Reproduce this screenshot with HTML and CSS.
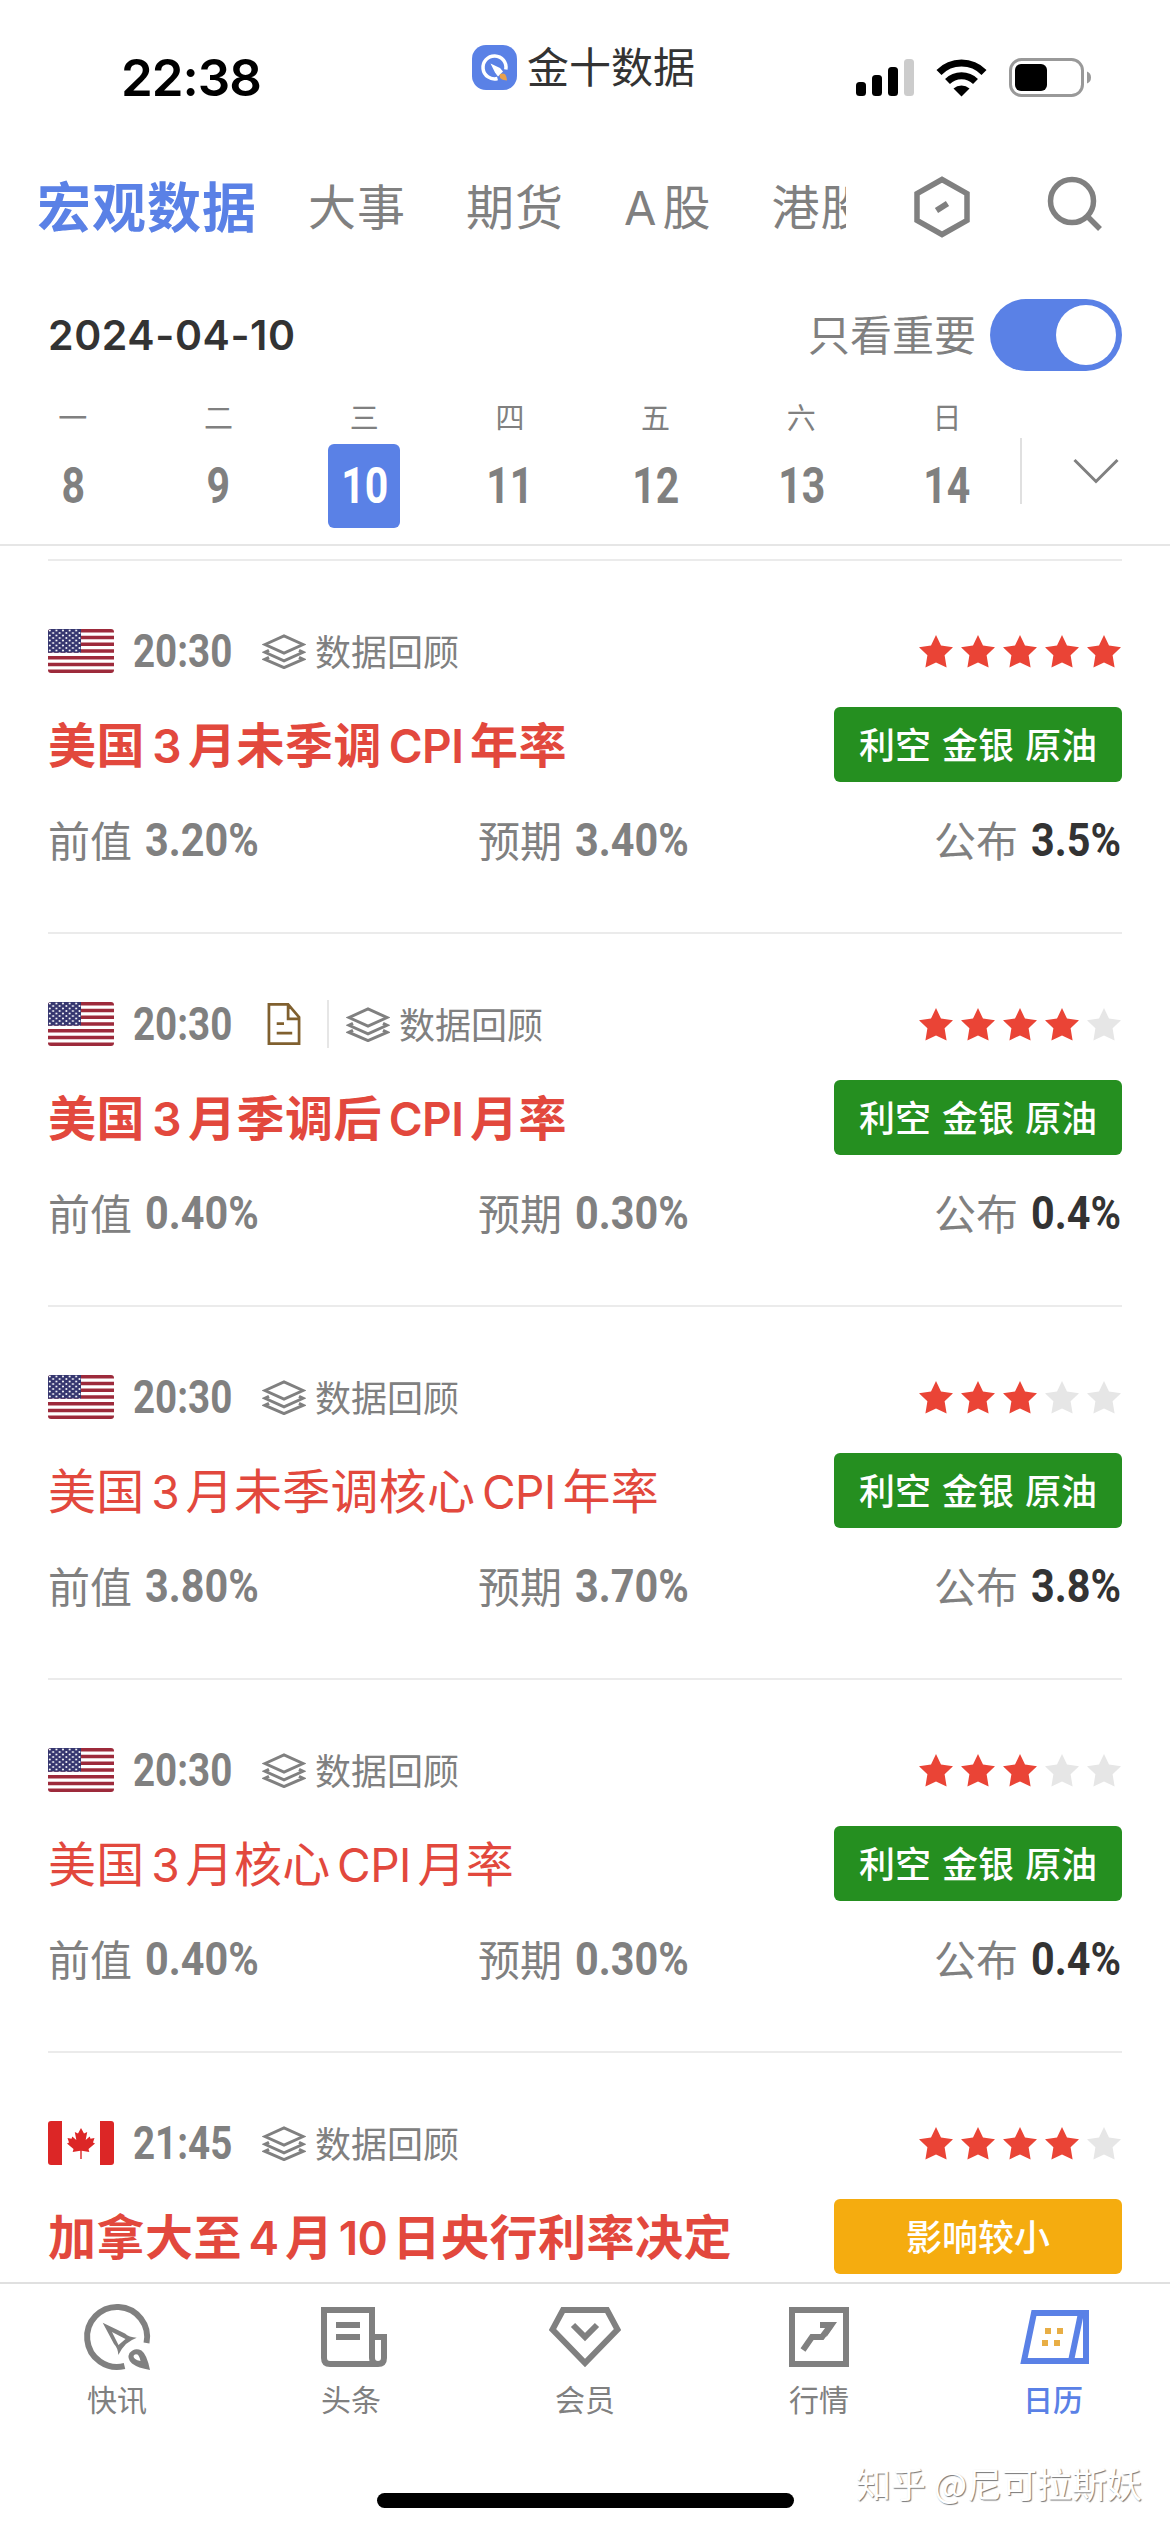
FILE: index.html
```html
<!DOCTYPE html>
<html lang="zh-CN">

<head>
  <meta charset="UTF-8">
  <meta name="viewport" content="width=device-width, initial-scale=1.0">
  <title>金十数据</title>
  <link rel="stylesheet" href="styles.css">
</head>

<body>
  <!-- 公用图标 -->
  <svg class="defs" width="0" height="0">
    <symbol id="star" viewBox="0 0 34 33">
      <path d="M17 0l5 10.600 12 1.600-8.400 8 2 12.300L17 27.400 6.400 32.500l2-12.300L0 12.200l12-1.600z" />
    </symbol>
    <symbol id="layers" viewBox="0 0 44 35">
      <g fill="none" stroke="#808080" stroke-width="3">
        <path d="M3 10.500L22 2l19 8.500L22 19z" />
        <path d="M7 16.300l-4 2 19 8.500 19-8.500-4-2" />
        <path d="M7 23.300l-4 2 19 8.300 19-8.300-4-2" />
      </g>
    </symbol>
    <pattern id="dots" width="6.600" height="5" patternUnits="userSpaceOnUse">
      <circle cx="1.800" cy="1.500" r="1" fill="#fff" />
      <circle cx="5.100" cy="4" r="1" fill="#fff" />
    </pattern>
    <symbol id="us" viewBox="0 0 66 44">
      <rect width="66" height="44" fill="#fff" />
      <path d="M0 1.700h66M0 8.500h66M0 15.200h66M0 22h66M0 28.800h66M0 35.500h66M0 42.300h66" stroke="#9d2a3b" stroke-width="3.400" />
      <rect width="33" height="23.700" fill="#35366f" />
      <rect width="33" height="23.700" fill="url(#dots)" />
    </symbol>
    <symbol id="ca" viewBox="0 0 66 44">
      <rect width="66" height="44" fill="#fff" />
      <path d="M0 0h14v44H0zM52 0h14v44H52z" fill="#dc2626" />
      <path d="M33 7l-3 5.500-3.200-1.500 1.500 8-4-3.500-.8 2.300-4-.8 1.500 4.500-2 1 6.500 5.500-.8 3 7.600-1.200V38h1.400v-8.200l7.600 1.200-.8-3 6.500-5.500-2-1 1.500-4.500-4 .8-.8-2.300-4 3.500 1.500-8-3.200 1.500z" fill="#dc2626" />
    </symbol>
  </svg>

  <div class="status">
    <span class="clock">22:38</span>
    <div class="app">
      <svg class="logo" viewBox="0 0 45 45">
        <rect width="45" height="45" rx="14" fill="#5a81e6" />
        <path d="M25.500 33.500a11.500 11.500 0 1 1 8.300-9" fill="none" stroke="#fff" stroke-width="3.500" />
        <path d="M18.500 18.500l9.500 4.500 3 3.500-5 5-3-4z" fill="#fff" />
        <path d="M28 29c5-2 6.500 1 7 6.500-5-.5-8.500-2-7-6.500z" fill="#e8a04c" />
      </svg>
      <span>金十数据</span>
    </div>
    <svg class="signal" viewBox="0 0 236 40">
      <rect x="0" y="24" width="10" height="14" rx="3.500" />
      <rect x="16" y="17" width="10" height="21" rx="3.500" />
      <rect x="32" y="9" width="10" height="29" rx="3.500" />
      <rect x="48" y="1" width="10" height="37" rx="3.500" fill="#ccc" />
      <g fill="none" stroke="#000" stroke-width="7">
        <path d="M83 14.500a31.500 31.500 0 0 1 45 0" />
        <path d="M91.500 23.500a20 20 0 0 1 28 0" />
      </g>
      <path d="M97.500 30.500a12 12 0 0 1 16 0l-8 8z" />
      <rect x="154.500" y="1.500" width="72" height="36" rx="11" fill="none" stroke="#999" stroke-width="3" />
      <rect x="159" y="6" width="32" height="27" rx="6" />
      <path d="M231 13.500q4 1.500 4 6t-4 6z" fill="#999" />
    </svg>
  </div>

  <div class="tabs">
    <div class="tab-list">
      <span class="active">宏观数据</span>
      <span>大事</span>
      <span>期货</span>
      <span><b class="en">A</b>股</span>
      <span>港股</span>
    </div>
    <svg class="hex" viewBox="0 0 56 62" fill="none" stroke="#808080">
      <path d="M28 3.500L53 17.500v27L28 58.500 3 44.500v-27z" stroke-width="5.500" />
      <path d="M22.500 34.500l11-7" stroke-width="6" />
    </svg>
    <svg class="search" viewBox="0 0 56 56" fill="none" stroke="#808080" stroke-width="5.500">
      <circle cx="25" cy="25" r="21.500" />
      <path d="M40 40l13 13" />
    </svg>
  </div>

  <div class="date-bar">
    <span class="date">2024-04-10</span>
    <span class="only">只看重要</span>
    <i class="switch"></i>
  </div>

  <div class="week">
    <div class="day"><span>一</span><b><i>8</i></b></div>
    <div class="day"><span>二</span><b><i>9</i></b></div>
    <div class="day on"><span>三</span><b><i>10</i></b></div>
    <div class="day"><span>四</span><b><i>11</i></b></div>
    <div class="day"><span>五</span><b><i>12</i></b></div>
    <div class="day"><span>六</span><b><i>13</i></b></div>
    <div class="day"><span>日</span><b><i>14</i></b></div>
    <div class="more">
      <svg viewBox="0 0 46 26" fill="none" stroke="#808080" stroke-width="3">
        <path d="M1.500 2L23 23.500 44.500 2" />
      </svg>
    </div>
  </div>

  <div class="list">
    <div class="item">
      <div class="top">
        <svg class="flag"><use href="#us" /></svg>
        <span class="time"><i>20:30</i></span>
        <svg class="layers"><use href="#layers" /></svg>
        <span class="review">数据回顾</span>
        <div class="stars" data-n="5"></div>
      </div>
      <div class="mid">
        <p class="title bold">美国<b class="num">3</b>月未季调<b class="cpi">CPI</b>年率</p>
        <span class="tag">利空 金银 原油</span>
      </div>
      <div class="values">
        <p>前值<span class="val"><i>3.20%</i></span></p>
        <p>预期<span class="val"><i>3.40%</i></span></p>
        <p>公布<span class="val now"><i>3.5%</i></span></p>
      </div>
    </div>

    <div class="item">
      <div class="top">
        <svg class="flag"><use href="#us" /></svg>
        <span class="time"><i>20:30</i></span>
        <span class="note">
          <svg class="doc" viewBox="0 0 36 46" fill="none" stroke="#80602f" stroke-width="3">
            <path d="M1.500 1.500h21l12 14v29h-33zM22.500 1.500v16h12M10 22.500h8M10 33h17" />
          </svg>
        </span>
        <svg class="layers"><use href="#layers" /></svg>
        <span class="review">数据回顾</span>
        <div class="stars" data-n="4"></div>
      </div>
      <div class="mid">
        <p class="title bold">美国<b class="num">3</b>月季调后<b class="cpi">CPI</b>月率</p>
        <span class="tag">利空 金银 原油</span>
      </div>
      <div class="values">
        <p>前值<span class="val"><i>0.40%</i></span></p>
        <p>预期<span class="val"><i>0.30%</i></span></p>
        <p>公布<span class="val now"><i>0.4%</i></span></p>
      </div>
    </div>

    <div class="item">
      <div class="top">
        <svg class="flag"><use href="#us" /></svg>
        <span class="time"><i>20:30</i></span>
        <svg class="layers"><use href="#layers" /></svg>
        <span class="review">数据回顾</span>
        <div class="stars" data-n="3"></div>
      </div>
      <div class="mid">
        <p class="title">美国<b class="num">3</b>月未季调核心<b class="cpi">CPI</b>年率</p>
        <span class="tag">利空 金银 原油</span>
      </div>
      <div class="values">
        <p>前值<span class="val"><i>3.80%</i></span></p>
        <p>预期<span class="val"><i>3.70%</i></span></p>
        <p>公布<span class="val now"><i>3.8%</i></span></p>
      </div>
    </div>

    <div class="item">
      <div class="top">
        <svg class="flag"><use href="#us" /></svg>
        <span class="time"><i>20:30</i></span>
        <svg class="layers"><use href="#layers" /></svg>
        <span class="review">数据回顾</span>
        <div class="stars" data-n="3"></div>
      </div>
      <div class="mid">
        <p class="title">美国<b class="num">3</b>月核心<b class="cpi">CPI</b>月率</p>
        <span class="tag">利空 金银 原油</span>
      </div>
      <div class="values">
        <p>前值<span class="val"><i>0.40%</i></span></p>
        <p>预期<span class="val"><i>0.30%</i></span></p>
        <p>公布<span class="val now"><i>0.4%</i></span></p>
      </div>
    </div>

    <div class="item">
      <div class="top">
        <svg class="flag"><use href="#ca" /></svg>
        <span class="time"><i>21:45</i></span>
        <svg class="layers"><use href="#layers" /></svg>
        <span class="review">数据回顾</span>
        <div class="stars" data-n="4"></div>
      </div>
      <div class="mid">
        <p class="title bold">加拿大至<b class="num">4</b>月<b class="ten">10</b>日央行利率决定</p>
        <span class="tag small">影响较小</span>
      </div>
    </div>
  </div>

  <div class="nav">
    <a>
      <svg viewBox="0 0 72 72">
        <path d="M43.500 65A30 30 0 1 1 65.500 42" fill="none" stroke="#808080" stroke-width="6" />
        <path d="M21.700 21.700L44 32.500q4 4 11.700 4.200-6 2.300-10.700 6.300-4.500 4.500-7.700 11Q37 47 33 43zM31 31l6.500 13 7-6z" fill="#808080" fill-rule="evenodd" />
        <path d="M69 69q-12-2-18-6.500-5.500-5-2.500-10.500 5-6 12-2.500 5.500 4 8.500 19.500zM59.500 60q-1-5-3-6.500-3-1-4 1.500 0 3.500 7 5z" fill="#808080" fill-rule="evenodd" />
      </svg>
      <span>快讯</span>
    </a>
    <a>
      <svg viewBox="0 0 72 72" fill="none" stroke="#808080" stroke-width="6">
        <path d="M54 63H15q-6 0-6-6V9h48v48q0 6 6 6t6-6V36H57" />
        <path d="M21 24h24M21 36h24" />
        <path d="M50 63h13" />
      </svg>
      <span>头条</span>
    </a>
    <a>
      <svg viewBox="0 0 72 72" fill="none" stroke="#808080" stroke-width="6">
        <path d="M14 9h44l10.500 19.500L36 62 3.500 28.500z" />
        <path d="M24 24l12 12 12-12" />
      </svg>
      <span>会员</span>
    </a>
    <a>
      <svg viewBox="0 0 72 72" fill="none" stroke="#808080" stroke-width="6">
        <path d="M9 9h54v54H9z" />
        <path d="M20 49l9-13h10l9-12" />
        <path d="M37 21h17L43.500 36 43 27h-6z" fill="#808080" stroke="none" />
      </svg>
      <span>行情</span>
    </a>
    <a class="on">
      <svg viewBox="0 0 72 72" fill="none" stroke="#5a81e6" stroke-width="6">
        <path d="M17 12h52v48H7z" />
        <path d="M64 12L54 60" />
        <path d="M28 27h6v6h-6zM40 27h6v6h-6zM25 39h6v6h-6zM37 39h6v6h-6z" fill="#e8ae45" stroke="none" />
      </svg>
      <span>日历</span>
    </a>
  </div>
  <i class="home"></i>
  <span class="mark">知乎 @尼可拉斯妖</span>

  <script>
    // 根据 data-n 渲染五颗星，超出的为灰色
    document.querySelectorAll('.stars').forEach(function (el) {
      let html = ''
      for (let i = 0; i < 5; i++) {
        html += `<svg class="${i < el.dataset.n ? 'full' : ''}"><use href="#star" /></svg>`
      }
      el.innerHTML = html
    })
  </script>
</body>

</html>
```
FILE: styles.css
```css
* {
  box-sizing: border-box;
}

body {
  margin: 0;
  width: 1170px;
  height: 2532px;
  overflow: hidden;
  position: relative;
  display: flex;
  flex-direction: column;
  background: #fff;
  color: #808080;
  font-family: "Noto Sans CJK SC", sans-serif;
}

p {
  margin: 0;
}

i {
  font-style: normal;
}

svg {
  display: block;
  flex: none;
}

.defs {
  position: absolute;
}

/* 状态栏 */
.status {
  height: 140px;
  flex: none;
  display: flex;
  align-items: flex-start;
  color: #000;
}

.status .clock {
  width: 351px;
  margin: 48px 0 0 121px;
  font: 600 51px/60px Inter, sans-serif;
  letter-spacing: -1px;
}

.app {
  display: flex;
  align-items: center;
  width: 384px;
  margin-top: 37px;
  height: 60px;
  color: #333;
  font-size: 42px;
}

.app .logo {
  width: 45px;
  height: 45px;
  margin-right: 10px;
}

.app span {
  padding-bottom: 6px;
}

.signal {
  width: 236px;
  height: 40px;
  margin-top: 58px;
}

/* 顶部分类 */
.tabs {
  height: 136px;
  flex: none;
  display: flex;
  align-items: center;
  padding: 0 0 2px 37px;
}

.tab-list {
  display: flex;
  align-items: center;
  width: 809px;
  height: 90px;
  padding-bottom: 6px;
  overflow: hidden;
  white-space: nowrap;
  font-size: 48px;
  letter-spacing: 1px;
}

.tab-list span {
  margin-right: 60px;
}

.tab-list .active {
  color: #5a81e6;
  font-size: 54px;
  font-weight: 700;
  margin-right: 51px;
}

.tab-list .en {
  font: 400 47px Inter, sans-serif;
  margin-right: 5px;
}

.hex {
  width: 56px;
  height: 62px;
  margin-left: 68px;
}

.search {
  width: 56px;
  height: 56px;
  margin: -6px 0 0 77px;
}

/* 日期 */
.date-bar {
  height: 118px;
  flex: none;
  display: flex;
  align-items: center;
  padding: 0 48px;
}

.date {
  flex: 1;
  color: #333;
  font: 600 41px Inter, sans-serif;
  letter-spacing: 0.600px;
}

.only {
  font-size: 42px;
  padding-bottom: 5px;
}

.switch {
  width: 132px;
  height: 72px;
  margin-left: 14px;
  padding: 6px;
  border-radius: 36px;
  background: #5a81e6;
}

.switch::after {
  content: "";
  display: block;
  width: 60px;
  height: 60px;
  margin-left: auto;
  border-radius: 50%;
  background: #fff;
}

.week {
  height: 152px;
  flex: none;
  display: flex;
  border-bottom: 2px solid #e6e6e6;
}

.day {
  width: 145.700px;
  display: flex;
  flex-direction: column;
  align-items: center;
  font-size: 29px;
  line-height: 44px;
}

.day b {
  width: 72px;
  height: 84px;
  margin-top: 6px;
  border-radius: 6px;
  text-align: center;
  font: 700 50px/84px Roboto, sans-serif;
}

.day b i,
.time i {
  display: inline-block;
  transform: scaleX(0.82);
}

.day.on b {
  background: #5a81e6;
  color: #fff;
}

.more {
  height: 66px;
  margin-top: 44px;
  padding: 20px 0 0 51px;
  border-left: 2px solid #e0e0e0;
}

.more svg {
  width: 46px;
  height: 26px;
}

/* 数据列表 */
.list {
  height: 1736px;
  flex: none;
  overflow: hidden;
  padding: 13px 48px 0;
}

.item {
  height: 373px;
  padding-top: 63px;
  border-top: 2px solid #ebebeb;
}

.top {
  display: flex;
  align-items: center;
  height: 54px;
}

.flag {
  width: 66px;
  height: 44px;
  border-radius: 3px;
}

.time {
  width: 97px;
  margin-left: 19px;
  margin-right: 32px;
  font: 700 47px/54px Roboto, sans-serif;
}

.time i,
.val i {
  transform-origin: left center;
}

.layers {
  width: 44px;
  height: 35px;
}

/* 右侧带分隔线 */
.note {
  width: 67px;
  height: 48px;
  margin-right: 17px;
  padding: 3px 0 0 4px;
  border-right: 2px solid #e6e6e6;
}

.doc {
  width: 36px;
  height: 42px;
}

.review {
  font-size: 36px;
  margin-left: 9px;
  padding-bottom: 2px;
}

.stars {
  display: flex;
  gap: 8px;
  margin-left: auto;
  margin-right: 1px;
}

.stars svg {
  width: 34px;
  height: 33px;
  fill: #e6e6e6;
}

.stars .full {
  fill: #ea4436;
}

.mid {
  display: flex;
  align-items: center;
  justify-content: space-between;
  height: 75px;
  margin-top: 29px;
}

.title {
  padding-bottom: 5px;
  color: #e2483d;
  font-size: 48px;
  letter-spacing: 0.300px;
  white-space: nowrap;
}

.title b {
  display: inline-block;
  text-align: center;
  font-family: Inter, sans-serif;
  font-weight: 400;
  font-size: 46px;
  letter-spacing: -0.500px;
}

.title.bold {
  letter-spacing: 0.500px;
}

.title.bold,
.title.bold b {
  font-weight: 600;
}

.title .num {
  width: 41px;
}

.title .cpi {
  width: 87px;
}

.title.bold .num {
  width: 43px;
}

.title.bold .cpi {
  width: 88px;
}

.title.bold .ten {
  width: 59px;
}

.tag {
  width: 288px;
  height: 75px;
  border-radius: 6px;
  background: #258f20;
  color: #fff;
  text-align: center;
  font-size: 36px;
  font-weight: 500;
  line-height: 73px;
  word-spacing: 3px;
}

.tag.small {
  background: #f5ac0f;
}

.values {
  display: grid;
  grid-template-columns: 430px 1fr auto;
  height: 60px;
  margin-top: 27px;
  font-size: 42px;
  line-height: 60px;
}

.values p {
  display: flex;
}

.val {
  width: 114px;
  margin-left: 13px;
  font: 700 47px/62px Roboto, sans-serif;
}

.val i {
  display: inline-block;
  transform: scaleX(0.88);
}

.val.now {
  width: 91px;
  color: #333;
}

/* 底部导航 */
.nav {
  height: 250px;
  flex: none;
  display: flex;
  border-top: 2px solid #e0e0e0;
}

.nav a {
  width: 234px;
  padding-top: 17px;
  display: flex;
  flex-direction: column;
  align-items: center;
  font-size: 30px;
  line-height: 44px;
}

.nav svg {
  width: 72px;
  height: 72px;
  margin-bottom: 3px;
}

.nav .on {
  color: #5a81e6;
  font-weight: 500;
}

.home {
  position: absolute;
  left: 377px;
  top: 2493px;
  width: 417px;
  height: 15px;
  border-radius: 8px;
  background: #000;
}

.mark {
  position: absolute;
  right: 28px;
  top: 2458px;
  color: #fff;
  font-size: 35px;
  line-height: 50px;
  text-shadow: 1px 1px 1px #777;
}
```
